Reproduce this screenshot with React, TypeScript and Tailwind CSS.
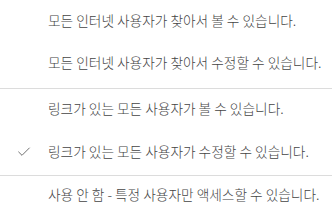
import { Check } from "lucide-react";

type Item = { label: string; checked?: boolean; h: string };

const groups: Item[][] = [
    [
        { label: "모든 인터넷 사용자가 찾아서 볼 수 있습니다.", h: "h-[41px]" },
        { label: "모든 인터넷 사용자가 찾아서 수정할 수 있습니다.", h: "h-[42px]" },
    ],
    [
        { label: "링크가 있는 모든 사용자가 볼 수 있습니다.", h: "h-[39px]" },
        { label: "링크가 있는 모든 사용자가 수정할 수 있습니다.", checked: true, h: "h-[47px]" },
    ],
    [{ label: "사용 안 함 - 특정 사용자만 액세스할 수 있습니다.", h: "h-[36px]" }],
];

const MenuRow = ({ item }: { item: Item }) => (
    <div className={`flex items-center ${item.h}`}>
        <div className="w-[48px] shrink-0 flex justify-center">
            {item.checked && <Check size={16} strokeWidth={1.5} className="text-[#707070]" />}
        </div>
        <span className="text-[13.7px] font-light text-[#444] whitespace-nowrap">{item.label}</span>
    </div>
);

export default function App() {
    return (
        <div
            className="w-[332px] h-[224px] bg-white overflow-hidden"
            style={{ fontFamily: '"Noto Sans CJK KR", "Noto Sans", sans-serif' }}
        >
            <div className="pb-[5px]">
                {groups[0].map((item) => (
                    <MenuRow key={item.label} item={item} />
                ))}
            </div>
            <div className="border-t border-[#dcdcdc]">
                {groups[1].map((item) => (
                    <MenuRow key={item.label} item={item} />
                ))}
            </div>
            <div className="border-t border-[#dcdcdc]">
                {groups[2].map((item) => (
                    <MenuRow key={item.label} item={item} />
                ))}
            </div>
        </div>
    );
}
